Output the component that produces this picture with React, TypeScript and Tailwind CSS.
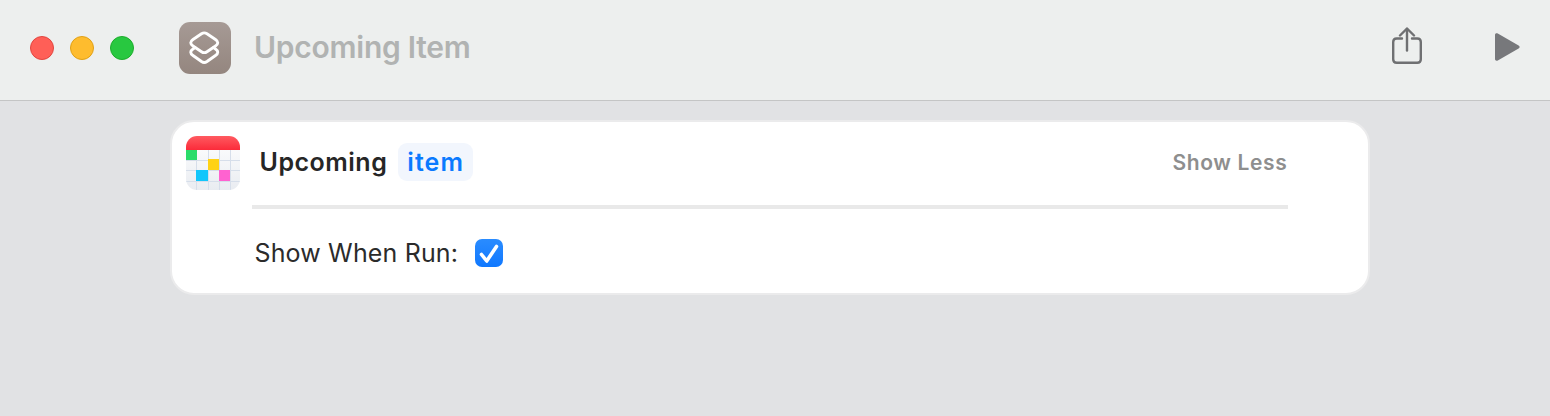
import React from 'react'

function ShortcutsIcon() {
  return (
    <div className="h-[52px] w-[52px] rounded-[11px] bg-gradient-to-b from-[#a69a95] to-[#94867f] flex items-center justify-center">
      <svg width="34" height="34" viewBox="0 0 34 34" fill="none" stroke="#ffffff" strokeWidth="2.9" strokeLinejoin="round" strokeLinecap="round" className="-ml-[1px]">
        <path d="M7 16.6 L5 18 C2 20 2 22.5 5 24.5 L13.5 30.5 C15 31.5 17.5 31.5 19 30.5 L27.5 24.5 C30.5 22.5 30.5 20 27.5 18 L25.5 16.6" />
        <path d="M13.5 2.8 C15 1.8 17.5 1.8 19 2.8 L27.5 8.5 C30.5 10.5 30.5 13 27.5 15 L19 20.7 C17.5 21.7 15 21.7 13.5 20.7 L5 15 C2 13 2 10.5 5 8.5 Z" />
      </svg>
    </div>
  )
}

function CalendarIcon() {
  return (
    <svg width="54" height="54" viewBox="0 0 54 54" className="shrink-0">
      <defs>
        <clipPath id="cal-clip">
          <rect x="0" y="0" width="54" height="54" rx="11" />
        </clipPath>
        <linearGradient id="cal-bg" x1="0" y1="0" x2="0" y2="1">
          <stop offset="0" stopColor="#ffffff" />
          <stop offset="1" stopColor="#e9ecf1" />
        </linearGradient>
        <linearGradient id="cal-red" x1="0" y1="0" x2="0" y2="1">
          <stop offset="0" stopColor="#ff5a60" />
          <stop offset="1" stopColor="#fb2b3a" />
        </linearGradient>
      </defs>
      <g clipPath="url(#cal-clip)">
        <rect width="54" height="54" fill="url(#cal-bg)" />
        {[10, 22, 33, 44].map((x) => (
          <rect key={x} x={x} y="14" width="1" height="40" fill="#d6deea" />
        ))}
        {[24, 34, 45].map((y) => (
          <rect key={y} x="0" y={y} width="54" height="1" fill="#d6deea" />
        ))}
        <rect x="0" y="14" width="11" height="10" fill="#2bdc6a" />
        <rect x="22" y="23" width="11" height="11" fill="#ffd214" />
        <rect x="10" y="34" width="12" height="11" fill="#12c6fb" />
        <rect x="33" y="34" width="11" height="11" fill="#ff62d0" />
        <rect width="54" height="14" fill="url(#cal-red)" />
      </g>
    </svg>
  )
}

export default function App() {
  return (
    <div className="h-[416px] w-[1550px] overflow-hidden bg-[#e1e2e4] font-['Inter',sans-serif]">
      {/* Title bar */}
      <div className="h-[101px] bg-[#edefee] border-b border-[#c4c5c5] flex items-center pl-[30px] pr-[30px] pb-[5px]">
        <div className="flex items-center gap-4">
          <div className="h-6 w-6 rounded-full bg-[#ff5f57] border border-[#e2463f]" />
          <div className="h-6 w-6 rounded-full bg-[#febc2e] border border-[#e1a116]" />
          <div className="h-6 w-6 rounded-full bg-[#28c840] border border-[#1dad2b]" />
        </div>
        <div className="ml-[45px]">
          <ShortcutsIcon />
        </div>
        <div className="ml-[23px] text-[30px] font-semibold text-[#b1b3b2] tracking-[-0.25px]">Upcoming Item</div>
        <div className="ml-auto flex items-center gap-[73px]">
          <svg width="30" height="37" viewBox="0 0 30 37" fill="none" stroke="#6f7072" strokeWidth="2.4" strokeLinecap="round" strokeLinejoin="round" className="mb-[4px]">
            <path d="M10 11.5 H4.7 C2.6 11.5 1.2 12.9 1.2 15 V32.3 C1.2 34.4 2.6 35.8 4.7 35.8 H25.3 C27.4 35.8 28.8 34.4 28.8 32.3 V15 C28.8 12.9 27.4 11.5 25.3 11.5 H20" />
            <path d="M15 23.5 V2" />
            <path d="M8 8.5 L15 1.5 L22 8.5" />
          </svg>
          <svg width="25" height="28" viewBox="0 0 25 28" className="mb-[1px]">
            <path d="M0 2 C0 0.5 1.4 -0.2 2.8 0.6 L23.6 12.4 C25 13.2 25 14.8 23.6 15.6 L2.8 27.4 C1.4 28.2 0 27.5 0 26 Z" fill="#77787b" />
          </svg>
        </div>
      </div>

      {/* Action card */}
      <div className="ml-[170px] mt-[19px] h-[175px] w-[1200px] rounded-[24px] bg-white border-[2.5px] border-[#ebebec] pl-[13.5px] pt-[13.5px]">
        <div className="flex items-start">
          <CalendarIcon />
          <div className="ml-3 w-[1036px]">
            <div className="flex h-[54px] items-center pl-2 pb-[2px]">
              <span className="mt-[2px] text-[25px] font-semibold text-[#262626] tracking-[0.5px]">Upcoming</span>
              <span className="ml-[11px] h-[38px] rounded-[9px] bg-[#f2f6fd] px-[9px] text-[25px] font-semibold leading-[38px] text-[#0a7aff] tracking-[1.1px]">item</span>
              <span className="ml-auto mt-[2px] text-[21px] font-semibold text-[#8e8e8e] tracking-[0.65px]">Show Less</span>
            </div>
            <div className="mt-[15px] h-1 bg-[#e9e9e9]" />
            <div className="mt-[26px] flex items-center pl-[3px]">
              <span className="text-[25px] text-[#2b2b2b] tracking-[0.15px]">Show When Run:</span>
              <div className="ml-[17px] h-7 w-7 rounded-[7px] bg-gradient-to-b from-[#2a8cff] to-[#0f78ff]">
                <svg width="28" height="28" viewBox="0 0 28 28" fill="none" stroke="#ffffff" strokeWidth="3.6" strokeLinecap="round" strokeLinejoin="round">
                  <path d="M6.5 15.5 L11.7 22 L21.5 7.5" />
                </svg>
              </div>
            </div>
          </div>
        </div>
      </div>
    </div>
  )
}
